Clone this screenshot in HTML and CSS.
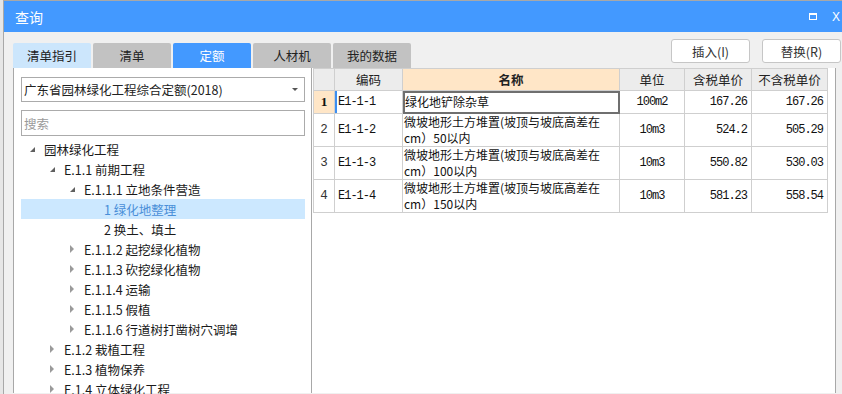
FILE: index.html
```html
<!DOCTYPE html>
<html lang="zh-CN">
<head>
    <meta charset="UTF-8">
    <meta name="viewport" content="width=device-width, initial-scale=1.0">
    <title>查询</title>
    <link rel="stylesheet" href="styles.css">
</head>
<body>
    <div class="window">
        <div class="titlebar">
            <span class="title">查询</span>
            <span class="win-btns">
                <i class="max"></i>
                <i class="close">X</i>
            </span>
        </div>
        <div class="toolbar">
            <div class="tabs">
                <div class="tab light">清单指引</div>
                <div class="tab">清单</div>
                <div class="tab active">定额</div>
                <div class="tab">人材机</div>
                <div class="tab">我的数据</div>
            </div>
            <div class="actions">
                <button class="btn">插入(I)</button>
                <button class="btn">替换(R)</button>
            </div>
        </div>
        <div class="main">
            <div class="left">
                <div class="combo">
                    <span>广东省园林绿化工程综合定额(2018)</span>
                    <i class="combo-arrow"></i>
                </div>
                <div class="search">搜索</div>
                <div class="tree">
                    <div class="node lv0"><i class="arrow open"></i><span>园林绿化工程</span></div>
                    <div class="node lv1"><i class="arrow open"></i><span>E.1.1 前期工程</span></div>
                    <div class="node lv2"><i class="arrow open"></i><span>E.1.1.1 立地条件营造</span></div>
                    <div class="node lv3 selected"><i class="arrow none"></i><span>1 绿化地整理</span></div>
                    <div class="node lv3"><i class="arrow none"></i><span>2 换土、填土</span></div>
                    <div class="node lv2"><i class="arrow shut"></i><span>E.1.1.2 起挖绿化植物</span></div>
                    <div class="node lv2"><i class="arrow shut"></i><span>E.1.1.3 砍挖绿化植物</span></div>
                    <div class="node lv2"><i class="arrow shut"></i><span>E.1.1.4 运输</span></div>
                    <div class="node lv2"><i class="arrow shut"></i><span>E.1.1.5 假植</span></div>
                    <div class="node lv2"><i class="arrow shut"></i><span>E.1.1.6 行道树打凿树穴调增</span></div>
                    <div class="node lv1"><i class="arrow shut"></i><span>E.1.2 栽植工程</span></div>
                    <div class="node lv1"><i class="arrow shut"></i><span>E.1.3 植物保养</span></div>
                    <div class="node lv1"><i class="arrow shut"></i><span>E.1.4 立体绿化工程</span></div>
                </div>
            </div>
            <div class="right">
                <table class="grid">
                    <colgroup>
                        <col class="c-no">
                        <col class="c-code">
                        <col class="c-name">
                        <col class="c-unit">
                        <col class="c-price">
                        <col class="c-price2">
                    </colgroup>
                    <thead>
                        <tr>
                            <th></th>
                            <th>编码</th>
                            <th class="hl">名称</th>
                            <th>单位</th>
                            <th>含税单价</th>
                            <th>不含税单价</th>
                        </tr>
                    </thead>
                    <tbody>
                        <tr class="short">
                            <td class="no cur">1</td>
                            <td class="code mark">E1-1-1</td>
                            <td class="name focus">绿化地铲除杂草</td>
                            <td class="unit">100m2</td>
                            <td class="num">167.26</td>
                            <td class="num">167.26</td>
                        </tr>
                        <tr>
                            <td class="no">2</td>
                            <td class="code">E1-1-2</td>
                            <td class="name">微坡地形土方堆置(坡顶与坡底高差在<br>cm）50以内</td>
                            <td class="unit">10m3</td>
                            <td class="num">524.2</td>
                            <td class="num">505.29</td>
                        </tr>
                        <tr>
                            <td class="no">3</td>
                            <td class="code">E1-1-3</td>
                            <td class="name">微坡地形土方堆置(坡顶与坡底高差在<br>cm）100以内</td>
                            <td class="unit">10m3</td>
                            <td class="num">550.82</td>
                            <td class="num">530.03</td>
                        </tr>
                        <tr>
                            <td class="no">4</td>
                            <td class="code">E1-1-4</td>
                            <td class="name">微坡地形土方堆置(坡顶与坡底高差在<br>cm）150以内</td>
                            <td class="unit">10m3</td>
                            <td class="num">581.23</td>
                            <td class="num">558.54</td>
                        </tr>
                    </tbody>
                </table>
            </div>
        </div>
    </div>
</body>
</html>
```
FILE: styles.css
```css
body {
    margin: 0;
    background: #e6e6e6;
    font-family: "Noto Sans CJK SC", "Noto Sans", sans-serif;
    font-size: 12px;
    color: #222;
    overflow: hidden;
}
.window {
    margin-left: 3px;
    height: 393px;
    background: #f0f0f0;
    border-left: 1px solid #a8a8a8;
    border-top: 1px solid #a8a8a8;
}
.titlebar {
    height: 31px;
    background: #4399ff;
    display: flex;
    align-items: center;
    justify-content: space-between;
    color: #fff;
}
.title {
    font-size: 14px;
    padding-left: 11px;
    line-height: 20px;
}
.win-btns {
    display: flex;
    align-items: center;
}
.max {
    display: block;
    width: 6px;
    height: 4px;
    border: 1.5px solid #fff;
    border-top-width: 2.5px;
    margin-right: 15px;
}
.close {
    font-style: normal;
    font-family: "Liberation Sans", sans-serif;
    font-size: 12px;
    width: 10px;
}
.toolbar {
    height: 36px;
    display: flex;
    justify-content: space-between;
    padding-left: 9px;
    padding-right: 1px;
}
.tabs {
    display: flex;
    gap: 2px;
    margin-top: 11px;
}
.tab {
    width: 78px;
    height: 25px;
    line-height: 25px;
    text-align: center;
    background: #c2c2c2;
    color: #222;
    border-radius: 2px 2px 0 0;
    font-size: 12.5px;
}
.tab.light {
    background: #cce6fc;
}
.tab.active {
    background: #4399ff;
    color: #fff;
}
.actions {
    display: flex;
    gap: 12px;
    margin-top: 7px;
}
.btn {
    width: 79px;
    height: 24px;
    background: #fff;
    border: 1px solid #c6c6c6;
    border-radius: 3px;
    font-family: inherit;
    font-size: 12.5px;
    color: #333;
    padding: 0;
}
.main {
    display: flex;
    height: 325px;
}
.left {
    margin-left: 9px;
    width: 299px;
    background: #fff;
    border-left: 1px solid #a8a8a8;
    border-right: 1px solid #a8a8a8;
    padding: 9px 6px 0 7px;
    box-sizing: border-box;
}
.combo, .search {
    height: 25px;
    border: 1px solid #ababab;
    box-sizing: border-box;
    display: flex;
    align-items: center;
    padding-left: 2px;
    font-size: 12.5px;
}
.combo {
    justify-content: space-between;
    padding-right: 6px;
}
.combo-arrow {
    width: 0;
    height: 0;
    border-left: 3px solid transparent;
    border-right: 3px solid transparent;
    border-top: 3px solid #555;
}
.search {
    margin-top: 8px;
    height: 26px;
    color: #9a9a9a;
}
.tree {
    margin-top: 3px;
}
.node {
    height: 20px;
    display: flex;
    align-items: center;
    font-size: 12.5px;
    color: #1a1a1a;
}
.node.selected {
    background: #cce8ff;
    color: #4a8fd8;
}
.lv0 { padding-left: 8px; }
.lv1 { padding-left: 28px; }
.lv2 { padding-left: 48px; }
.lv3 { padding-left: 68px; }
.arrow {
    display: block;
    width: 15px;
    height: 20px;
    position: relative;
}
.arrow.open::before {
    content: "";
    position: absolute;
    left: 1px;
    top: 8px;
    border-left: 5px solid transparent;
    border-bottom: 5px solid #606060;
}
.arrow.shut::before {
    content: "";
    position: absolute;
    left: 1px;
    top: 6px;
    border-top: 4px solid transparent;
    border-bottom: 4px solid transparent;
    border-left: 4px solid #9a9a9a;
}
.right {
    width: 524px;
    background: #fff;
    border-right: 1px solid #a8a8a8;
    box-sizing: border-box;
    padding-left: 1px;
}
.grid {
    border-collapse: collapse;
    table-layout: fixed;
    width: 514px;
}
.c-no { width: 21px; }
.c-code { width: 68px; }
.c-name { width: 217px; }
.c-unit { width: 65px; }
.c-price { width: 67px; }
.c-price2 { width: 76px; }
.grid th, .grid td {
    border: 1px solid #cfcfcf;
    padding: 0;
}
.grid th {
    height: 21px;
    background: #ececec;
    font-weight: normal;
    font-size: 12.5px;
    color: #222;
}
.grid th.hl {
    background: #ffe6c7;
    font-weight: bold;
}
.grid td {
    height: 32px;
    line-height: 16px;
    color: #111;
}
.grid tr.short td {
    height: 22px;
}
.no {
    text-align: center;
    font-family: "Liberation Mono", monospace;
    font-size: 12.5px;
    color: #333 !important;
}
.no.cur {
    background: #ffe6c7;
    font-family: "Liberation Serif", serif;
    font-weight: bold;
    font-size: 13.5px;
    color: #111 !important;
}
.code {
    font-family: "Liberation Mono", monospace;
    font-size: 12px;
    letter-spacing: -1px;
    padding-left: 3px !important;
}
.code.mark {
    box-shadow: inset 2px 0 0 #3d8ef0;
}
.name {
    padding-left: 1px !important;
    font-size: 12px;
}
.name.focus {
    outline: 2px solid #6f6f6f;
    outline-offset: -2px;
    padding-left: 2px !important;
}
.unit {
    text-align: center;
    font-family: "Liberation Mono", monospace;
    font-size: 12px;
    letter-spacing: -1px;
}
.num {
    text-align: right;
    font-family: "Liberation Mono", monospace;
    font-size: 12px;
    letter-spacing: -1px;
    padding-right: 4px !important;
}
```
